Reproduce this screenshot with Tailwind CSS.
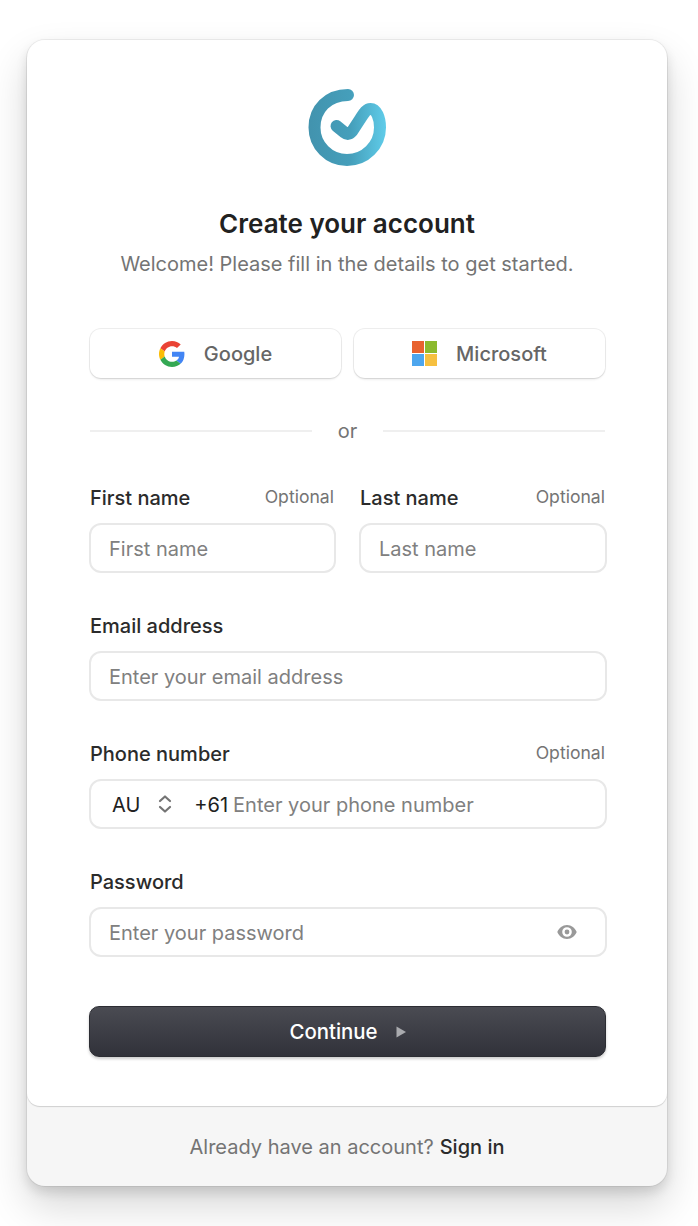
<!DOCTYPE html>
<html lang="en">
<head>
  <meta charset="UTF-8" />
  <title>Create your account</title>
  <script src="https://cdn.jsdelivr.net/npm/@tailwindcss/browser@4"></script>
</head>
<body class="bg-white font-['Inter',sans-serif] text-[#212121] overflow-hidden">
  <div class="w-[698px] h-[1226px] pt-[40px] pl-[27px]">
    <div class="w-[640px] h-[1146px] rounded-[18px] bg-[#f6f6f6] flex flex-col shadow-[0_0_0_1px_rgba(0,0,0,0.06),0_6px_12px_rgba(0,0,0,0.12),0_20px_40px_rgba(0,0,0,0.16)]">
      <!-- main panel -->
      <div class="h-[1066px] bg-white rounded-t-[18px] rounded-b-[13px] shadow-[0_1px_1px_rgba(0,0,0,0.16)] pl-[62px] pr-[60px] flex flex-col">
        <div class="flex justify-center pt-[48px] pr-[2px]">
          <svg width="80" height="80" viewBox="0 0 80 80" fill="none">
            <defs>
              <linearGradient id="logo" gradientUnits="userSpaceOnUse" x1="2" y1="40" x2="78" y2="40">
                <stop offset="0" stop-color="#4293ae"/>
                <stop offset="0.55" stop-color="#459fbb"/>
                <stop offset="1" stop-color="#5fcbe8"/>
              </linearGradient>
            </defs>
            <path d="M41 7C21 7 7.500 21 7.500 39.500C7.500 57.500 22 72 40 72C58 72 73 57.500 73 39.500C73 30 69.500 21 63.500 21C59 21 56.500 26 52.500 32L45 43.500C42.500 46.500 40 46.500 37.500 44.500L29.500 38" stroke="url(#logo)" stroke-width="12" stroke-linecap="round" stroke-linejoin="round"/>
          </svg>
        </div>
        <h1 class="mt-[40px] text-center text-[26px] leading-[32px] font-semibold pr-[2px]">Create your account</h1>
        <p class="mt-[12px] text-center text-[20px] leading-[24px] text-[#747474] pr-[2px]">Welcome! Please fill in the details to get started.</p>

        <div class="mt-[53px] grid grid-cols-2 gap-[13px] ml-px mr-[2px]">
          <button class="h-[49px] rounded-[11px] bg-white shadow-[0_0_0_1px_rgba(0,0,0,0.07),0_2px_3px_-1px_rgba(0,0,0,0.14)] flex items-center justify-center gap-[19px] text-[20px] font-medium text-[#666666]">
            <svg width="26" height="26" viewBox="0 0 48 48">
              <path fill="#EA4335" d="M24 9.500c3.540 0 6.710 1.220 9.210 3.600l6.850-6.850C35.900 2.380 30.470 0 24 0 14.620 0 6.510 5.380 2.560 13.220l7.980 6.190C12.430 13.720 17.740 9.500 24 9.500z"/>
              <path fill="#4285F4" d="M46.980 24.550c0-1.570-.15-3.090-.38-4.550H24v9.020h12.940c-.58 2.960-2.260 5.480-4.780 7.180l7.730 6c4.510-4.180 7.090-10.360 7.090-17.650z"/>
              <path fill="#FBBC05" d="M10.530 28.590c-.48-1.450-.76-2.990-.76-4.590s.27-3.140.76-4.590l-7.980-6.190C.92 16.460 0 20.120 0 24c0 3.880.92 7.540 2.560 10.780l7.970-6.190z"/>
              <path fill="#34A853" d="M24 48c6.480 0 11.930-2.130 15.890-5.810l-7.730-6c-2.150 1.450-4.920 2.300-8.160 2.300-6.260 0-11.570-4.220-13.470-9.910l-7.980 6.190C6.510 42.620 14.620 48 24 48z"/>
            </svg>
            <span>Google</span>
          </button>
          <button class="h-[49px] rounded-[11px] bg-white shadow-[0_0_0_1px_rgba(0,0,0,0.07),0_2px_3px_-1px_rgba(0,0,0,0.14)] flex items-center justify-center gap-[19px] text-[20px] font-medium text-[#666666]">
            <span class="grid grid-cols-2 gap-px w-[25px] h-[25px]">
              <span class="bg-[#e8622f]"></span>
              <span class="bg-[#8cba2e]"></span>
              <span class="bg-[#4da6ee]"></span>
              <span class="bg-[#f6c040]"></span>
            </span>
            <span>Microsoft</span>
          </button>
        </div>

        <div class="mt-[41px] flex items-center gap-[26px] h-[24px] ml-px mr-[2px]">
          <div class="flex-1 h-[2px] bg-[#efefef]"></div>
          <span class="text-[20px] leading-[24px] text-[#747474]">or</span>
          <div class="flex-1 h-[2px] bg-[#efefef]"></div>
        </div>

        <div class="mt-[43px] grid grid-cols-[247px_248px] gap-[23px]">
          <div>
            <div class="flex items-center justify-between pl-px pr-[2px] h-[24px]">
              <label class="text-[20px] font-medium text-[#2b2b2b]">First name</label>
              <span class="text-[17.600px] text-[#747474] pb-[2px]">Optional</span>
            </div>
            <div class="mt-[13px] h-[50px] rounded-[12px] border-2 border-[#e8e8e8] flex items-center px-[18px] pt-[2px] text-[20px] text-[#808080]">First name</div>
          </div>
          <div>
            <div class="flex items-center justify-between pl-px pr-[2px] h-[24px]">
              <label class="text-[20px] font-medium text-[#2b2b2b]">Last name</label>
              <span class="text-[17.600px] text-[#747474] pb-[2px]">Optional</span>
            </div>
            <div class="mt-[13px] h-[50px] rounded-[12px] border-2 border-[#e8e8e8] flex items-center px-[18px] pt-[2px] text-[20px] text-[#808080]">Last name</div>
          </div>
        </div>

        <div class="mt-[41px]">
          <div class="flex items-center h-[24px] pl-px">
            <label class="text-[20px] font-medium text-[#2b2b2b]">Email address</label>
          </div>
          <div class="mt-[13px] h-[50px] rounded-[12px] border-2 border-[#e8e8e8] flex items-center px-[18px] pt-[2px] text-[20px] text-[#808080]">Enter your email address</div>
        </div>

        <div class="mt-[41px]">
          <div class="flex items-center justify-between h-[24px] pl-px pr-[2px]">
            <label class="text-[20px] font-medium text-[#2b2b2b]">Phone number</label>
            <span class="text-[17.600px] text-[#747474] pb-[2px]">Optional</span>
          </div>
          <div class="mt-[13px] h-[50px] rounded-[12px] border-2 border-[#e8e8e8] flex items-center pl-[21px] pt-[2px] text-[20px]">
            <span>AU</span>
            <svg class="ml-[18px] -mt-[2px]" width="14" height="20" viewBox="0 0 14 20" fill="none" stroke="#747474" stroke-width="2.200" stroke-linecap="round" stroke-linejoin="round">
              <path d="M2 7L7 2.500L12 7"/>
              <path d="M2 13L7 17.500L12 13"/>
            </svg>
            <span class="ml-[22px]">+61</span>
            <span class="ml-[5px] text-[#808080]">Enter your phone number</span>
          </div>
        </div>

        <div class="mt-[41px]">
          <div class="flex items-center h-[24px] pl-px">
            <label class="text-[20px] font-medium text-[#2b2b2b]">Password</label>
          </div>
          <div class="mt-[13px] h-[50px] rounded-[12px] border-2 border-[#e8e8e8] flex items-center justify-between pl-[18px] pr-[28px] text-[20px] text-[#808080]">
            <span class="pt-[2px]">Enter your password</span>
            <svg width="20" height="14" viewBox="0 0 20 14">
              <path fill="#999999" fill-rule="evenodd" d="M10 0C5.500 0 2 3 0.300 7C2 11 5.500 14 10 14C14.500 14 18 11 19.700 7C18 3 14.500 0 10 0ZM10 11.800A4.800 4.800 0 1 1 10 2.200A4.800 4.800 0 0 1 10 11.800Z"/>
              <circle cx="10" cy="7" r="2.400" fill="#999999"/>
            </svg>
          </div>
        </div>

        <button class="mt-[49px] mr-px h-[51px] rounded-[10px] bg-gradient-to-b from-[#4a4b52] to-[#31323a] border border-[#2c2d33] shadow-[0_2px_3px_rgba(0,0,0,0.2)] flex items-center justify-center gap-[16px] text-[20.400px] font-medium text-white">
          <span class="pt-[2px] pr-[2px]">Continue</span>
          <svg width="10" height="12" viewBox="0 0 10 12"><path fill="#a9aaae" d="M0.500 0.500L10 6L0.500 11.500Z"/></svg>
        </button>
      </div>
      <!-- footer -->
      <div class="flex-1 flex items-center justify-center text-[20px] text-[#747474] pt-[2px]">
        <span>Already have an account?</span>
        <a class="ml-[6px] font-medium text-[#2b2b2b]">Sign in</a>
      </div>
    </div>
  </div>
</body>
</html>
